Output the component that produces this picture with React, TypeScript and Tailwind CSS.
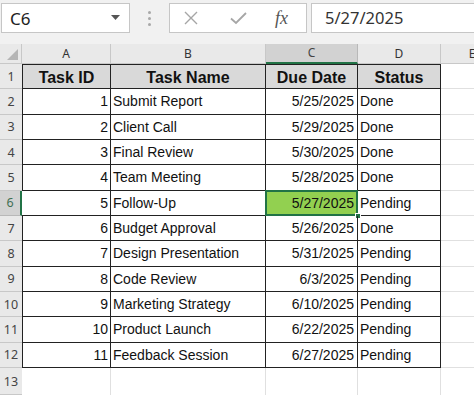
import React from "react";

const rows: [number, string, string, string][] = [
  [1, "Submit Report", "5/25/2025", "Done"],
  [2, "Client Call", "5/29/2025", "Done"],
  [3, "Final Review", "5/30/2025", "Done"],
  [4, "Team Meeting", "5/28/2025", "Done"],
  [5, "Follow-Up", "5/27/2025", "Pending"],
  [6, "Budget Approval", "5/26/2025", "Done"],
  [7, "Design Presentation", "5/31/2025", "Pending"],
  [8, "Code Review", "6/3/2025", "Pending"],
  [9, "Marketing Strategy", "6/10/2025", "Pending"],
  [10, "Product Launch", "6/22/2025", "Pending"],
  [11, "Feedback Session", "6/27/2025", "Pending"],
];

const ui = { fontFamily: '"Noto Sans", "Open Sans", sans-serif' };
const arial = { fontFamily: '"Liberation Sans", Arial, sans-serif' };

function ColHead({ label, selected, last }: { label: string; selected?: boolean; last?: boolean }) {
  return (
    <div
      className={
        "flex items-center justify-center text-[12px] " +
        (selected
          ? "bg-[#d2d2d2] text-[#444] border-b-2 border-b-[#217346] border-r border-r-[#b8b8b8]"
          : "bg-[#e9e9e9] text-[#333] border-b border-b-[#c8c8c8] " + (last ? "" : "border-r border-r-[#c8c8c8]"))
      }
      style={ui}
    >
      {label}
    </div>
  );
}

function RowHead({ n, selected }: { n: number; selected?: boolean }) {
  return (
    <div
      className={
        "flex items-end justify-center pb-[2px] text-[12.5px] border-b " +
        (selected
          ? "bg-[#d2d2d2] text-[#3f6f52] border-r-2 border-r-[#217346] border-b-[#b8b8b8]"
          : "bg-[#e9e9e9] text-[#444] border-b-[#c8c8c8]")
      }
      style={ui}
    >
      {n}
    </div>
  );
}

export default function App() {
  return (
    <div className="w-[474px] h-[395px] overflow-hidden bg-white flex flex-col">
      {/* Formula bar */}
      <div className="h-[44px] bg-[#f1f1f1] flex items-start pt-[3px] shrink-0">
        <div className="ml-[1px] w-[129px] h-[30px] bg-white border border-[#c6c6c6] flex items-center justify-between pl-[8px] pr-[9px]">
          <span className="text-[17px] text-[#222] leading-none" style={ui}>C6</span>
          <svg width="9" height="6" viewBox="0 0 9 6"><path d="M0 0 L9 0 L4.5 5 Z" fill="#555" /></svg>
        </div>
        <div className="w-[39px] h-[30px] flex flex-col items-center justify-center gap-[3px]">
          <span className="w-[3px] h-[3px] bg-[#a8a8a8] rounded-full" />
          <span className="w-[3px] h-[3px] bg-[#a8a8a8] rounded-full" />
          <span className="w-[3px] h-[3px] bg-[#a8a8a8] rounded-full" />
        </div>
        <div className="w-[138px] h-[30px] bg-white border border-[#c6c6c6] flex items-center">
          <svg className="ml-[13px]" width="16" height="16" viewBox="0 0 16 16">
            <path d="M2 2 L14 14 M14 2 L2 14" stroke="#a6a6a6" strokeWidth="1.4" fill="none" />
          </svg>
          <svg className="ml-[31px]" width="17" height="14" viewBox="0 0 17 14">
            <path d="M1 7.5 L6 12 L16 2" stroke="#a6a6a6" strokeWidth="1.8" fill="none" />
          </svg>
          <span
            className="ml-[28px] text-[18px] italic text-[#555] leading-none"
            style={{ fontFamily: '"Liberation Serif", "DejaVu Serif", serif' }}
          >
            fx
          </span>
        </div>
        <div className="ml-[4px] flex-1 h-[30px] bg-white border border-r-0 border-[#c6c6c6] flex items-center pl-[13px]">
          <span className="text-[16.5px] text-[#333] leading-none" style={ui}>5/27/2025</span>
        </div>
      </div>

      {/* Grid */}
      <div className="grid flex-1 w-[503px] grid-cols-[22px_89px_155px_92px_83px_62px] grid-rows-[20px_repeat(12,25.33px)_1fr]">
        {/* header row */}
        <div className="bg-[#e9e9e9] border-b border-b-[#c8c8c8] border-r border-r-[#c8c8c8] relative">
          <svg className="absolute right-[3px] bottom-[3px]" width="11" height="11" viewBox="0 0 11 11">
            <path d="M11 0 L11 11 L0 11 Z" fill="#b5b5b5" />
          </svg>
        </div>
        <ColHead label="A" />
        <ColHead label="B" />
        <ColHead label="C" selected />
        <ColHead label="D" />
        <ColHead label="E" last />

        {/* Row 1 */}
        <RowHead n={1} />
        {["Task ID", "Task Name", "Due Date", "Status"].map((t, i) => (
          <div
            key={t}
            className={
              "bg-[#d9d9d9] border-t border-b border-r border-[#222] flex items-center justify-center pt-[2px] text-[16px] font-bold text-[#111] " +
              (i === 0 ? "border-l" : "")
            }
            style={arial}
          >
            {t}
          </div>
        ))}
        <div className="border-b border-[#e0e0e0]" />

        {rows.map(([id, name, date, status], idx) => {
          const rn = idx + 2;
          const sel = rn === 6;
          return (
            <React.Fragment key={rn}>
              <RowHead n={rn} selected={sel} />
              <div
                className={
                  "border-b border-r border-[#222] flex items-center justify-end pt-[1px] pr-[2px] text-[14px] text-[#111] " +
                  (sel ? "" : "border-l")
                }
                style={arial}
              >
                {id}
              </div>
              <div className="border-b border-r border-[#222] flex items-center pt-[1px] pl-[2px] text-[14px] text-[#111] whitespace-nowrap" style={arial}>
                {name}
              </div>
              <div
                className={
                  "relative border-b border-r border-[#222] flex items-center justify-end pt-[1px] pr-[3px] text-[14px] text-[#111] " +
                  (sel ? "bg-[#92d050]" : "")
                }
                style={arial}
              >
                {date}
                {sel && (
                  <>
                    <div className="absolute -top-[1px] -left-[1px] -right-[1px] -bottom-[1px] border-2 border-[#217346]" />
                    <div className="absolute -right-[4px] -bottom-[4px] w-[6px] h-[6px] bg-[#217346] border border-white" />
                  </>
                )}
              </div>
              <div className="border-b border-r border-[#222] flex items-center pt-[1px] pl-[2px] text-[14px] text-[#111]" style={arial}>
                {status}
              </div>
              <div className="border-b border-[#e0e0e0]" />
            </React.Fragment>
          );
        })}

        {/* Row 13 */}
        <RowHead n={13} />
        <div className="border-r border-[#e0e0e0]" />
        <div className="border-r border-[#e0e0e0]" />
        <div className="border-r border-[#e0e0e0]" />
        <div className="border-r border-[#e0e0e0]" />
        <div />
      </div>
    </div>
  );
}
